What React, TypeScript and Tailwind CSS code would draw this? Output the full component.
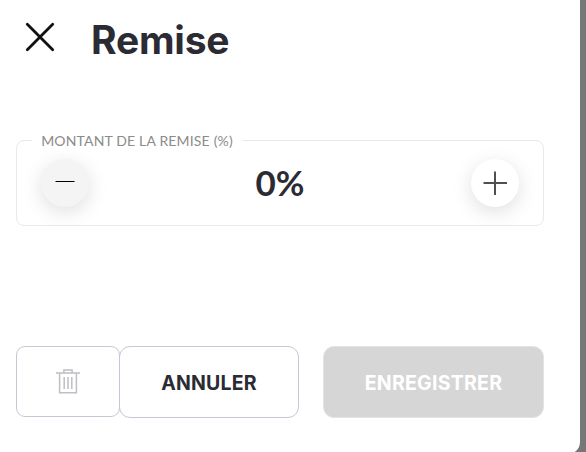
export default function App() {
  return (
    <div className="h-[452px] w-[586px] overflow-hidden bg-[#777777] font-['Inter','Open_Sans',sans-serif] text-[#2b2b33]">
      <section className="flex h-[454px] w-[580px] flex-col rounded-br-[12px] bg-white pl-4 pr-9">
        <header className="flex h-[130px] items-start pt-[15px]">
          <button aria-label="Fermer" className="ml-[9px] mt-[7px] size-[30px]">
            <svg viewBox="0 0 30 30" className="size-[30px]" fill="none" stroke="#111" strokeWidth="2.8" strokeLinecap="round">
              <path d="M2.3 2.3L27.7 27.7M27.7 2.3L2.3 27.7" />
            </svg>
          </button>
          <h1 className="ml-[36px] whitespace-nowrap text-[39px] font-bold leading-[50px] tracking-[-0.2px]">Remise</h1>
        </header>

        <fieldset className="h-[96px] w-[528px] rounded-[8px] border border-[#e9e9e9]">
          <legend className="ml-[15px] flex h-[21px] w-[210px] items-center justify-center whitespace-nowrap font-['Lato',sans-serif] text-[14px] leading-5 tracking-[0.17px] text-[#8b8b88]">
            MONTANT DE LA REMISE (%)
          </legend>
          <div className="flex items-start justify-between px-6 pt-2">
            <button aria-label="Diminuer" className="size-12 rounded-full bg-[#f4f4f4] shadow-[0_5px_20px_rgba(0,0,0,0.13)]">
              <svg viewBox="0 0 48 48" className="size-12" stroke="#000" strokeWidth="1">
                <path d="M14.5 22.5H33.5" />
              </svg>
            </button>
            <output className="whitespace-nowrap font-['Lato',sans-serif] text-[35px] font-bold leading-[46px]">0%</output>
            <button aria-label="Augmenter" className="size-12 rounded-full bg-white shadow-[0_5px_20px_rgba(0,0,0,0.13)]">
              <svg viewBox="0 0 48 48" className="size-12" stroke="#505050" strokeWidth="2">
                <path d="M12.5 24H36M24 12.5V36" />
              </svg>
            </button>
          </div>
        </fieldset>

        <footer className="mt-[120px] flex items-start">
          <button aria-label="Supprimer" className="flex h-[71px] w-[104px] items-center justify-center rounded-[9px] border border-[#c7c7d5]">
            <svg viewBox="0 0 24 25" className="-mt-px h-[25px] w-6" fill="none" stroke="#bfbfc4" strokeWidth="1.5">
              <path d="M0 4H24M3.6 4V23.8H20.4V4M7.9 4V1H16.1V4M8.2 8V20M12 8V20M15.8 8V20" />
            </svg>
          </button>
          <button className="-ml-px h-[72px] w-[180px] rounded-[11px] border border-[#c7c7d5] pt-[4px] text-[19.5px] font-bold tracking-[0.2px]">ANNULER</button>
          <button disabled className="ml-6 h-[72px] w-[221px] rounded-[11px] border border-[#e3e3e3] bg-[#d6d6d6] pt-[4px] text-[19.5px] font-bold tracking-[0.25px] text-white">
            ENREGISTRER
          </button>
        </footer>
      </section>
    </div>
  );
}
